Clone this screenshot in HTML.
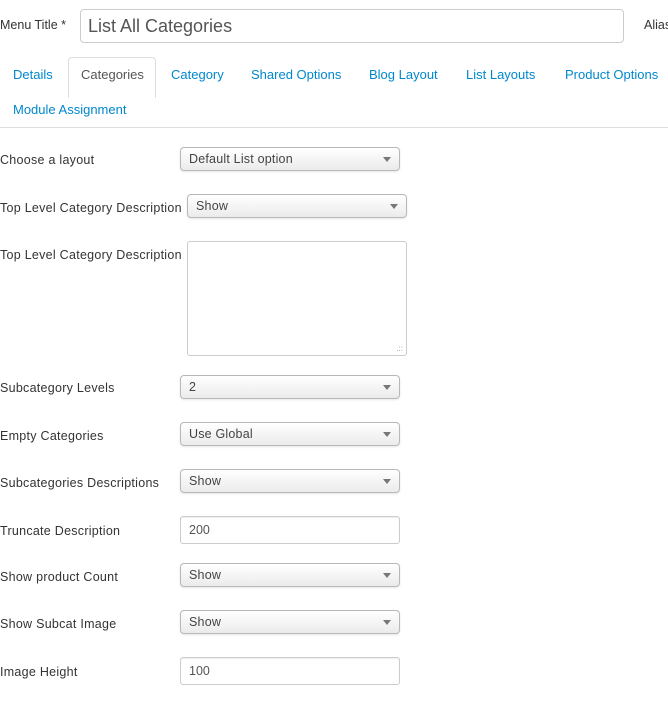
<!DOCTYPE html>
<html><head><style>
body{margin:0;width:668px;height:704px;background:#fff;font-family:"Liberation Sans",sans-serif;font-size:13px;color:#333;position:relative;overflow:hidden}
.a{position:absolute;white-space:nowrap}
.lbl{position:absolute;left:0;font-size:12.5px;color:#333;letter-spacing:0.27px}
.tab{position:absolute;top:67px;color:#0088cc;font-size:13px}
.sel{position:absolute;height:22px;border:1px solid #b8b8b8;border-radius:4px;background:linear-gradient(#fff,#ebebeb);box-shadow:0 1px 2px rgba(0,0,0,.1);font-size:12.5px;line-height:23px;padding-left:8px;box-sizing:content-box;color:#444;letter-spacing:0.2px}
.sel:after{content:"";position:absolute;right:8px;top:9px;border-left:4px solid transparent;border-right:4px solid transparent;border-top:5px solid #777}
.inp{position:absolute;border:1px solid #ccc;border-radius:3px;background:#fff;font-size:12.5px;padding-left:8px;box-shadow:inset 0 1px 1px rgba(0,0,0,.07);color:#555}
</style></head><body>
<div class="a" style="left:0;top:18px;font-size:12.5px">Menu Title *</div>
<div class="a" style="left:80px;top:9px;border:1px solid #ccc;border-radius:4px;font-size:18px;line-height:32px;padding-left:7px;box-sizing:border-box;width:544px;height:34px;color:#555">List All Categories</div>
<div class="a" style="left:644px;top:18px;font-size:12.5px">Alias</div>
<div class="a" style="left:68px;top:57px;width:86px;height:40px;border:1px solid #ddd;border-bottom:none;border-radius:4px 4px 0 0;background:#fff"></div>
<div class="tab" style="left:13px">Details</div>
<div class="tab" style="left:81px;color:#555">Categories</div>
<div class="tab" style="left:171px">Category</div>
<div class="tab" style="left:251px">Shared Options</div>
<div class="tab" style="left:369px">Blog Layout</div>
<div class="tab" style="left:466px">List Layouts</div>
<div class="tab" style="left:565px">Product Options</div>
<div class="tab" style="left:13px;top:102px">Module Assignment</div>
<div class="a" style="left:0;top:127px;width:668px;height:1px;background:#ddd"></div>

<div class="lbl" style="top:153px">Choose a layout</div>
<div class="sel" style="left:180px;top:147px;width:210px">Default List option</div>
<div class="lbl" style="top:201px">Top Level Category Description</div>
<div class="sel" style="left:187px;top:194px;width:210px">Show</div>
<div class="lbl" style="top:248px">Top Level Category Description</div>
<div class="a" style="left:187px;top:241px;width:218px;height:113px;border:1px solid #ccc;border-radius:3px"><span style="position:absolute;right:3px;bottom:2px;font-size:8px;color:#999;line-height:8px">.::</span></div>
<div class="lbl" style="top:381px">Subcategory Levels</div>
<div class="sel" style="left:180px;top:375px;width:210px">2</div>
<div class="lbl" style="top:429px">Empty Categories</div>
<div class="sel" style="left:180px;top:422px;width:210px">Use Global</div>
<div class="lbl" style="top:476px">Subcategories Descriptions</div>
<div class="sel" style="left:180px;top:469px;width:210px">Show</div>
<div class="lbl" style="top:524px">Truncate Description</div>
<div class="inp" style="left:180px;top:516px;width:210px;height:26px;line-height:27px">200</div>
<div class="lbl" style="top:570px">Show product Count</div>
<div class="sel" style="left:180px;top:563px;width:210px">Show</div>
<div class="lbl" style="top:617px">Show Subcat Image</div>
<div class="sel" style="left:180px;top:610px;width:210px">Show</div>
<div class="lbl" style="top:665px">Image Height</div>
<div class="inp" style="left:180px;top:657px;width:210px;height:26px;line-height:27px">100</div>
</body></html>
